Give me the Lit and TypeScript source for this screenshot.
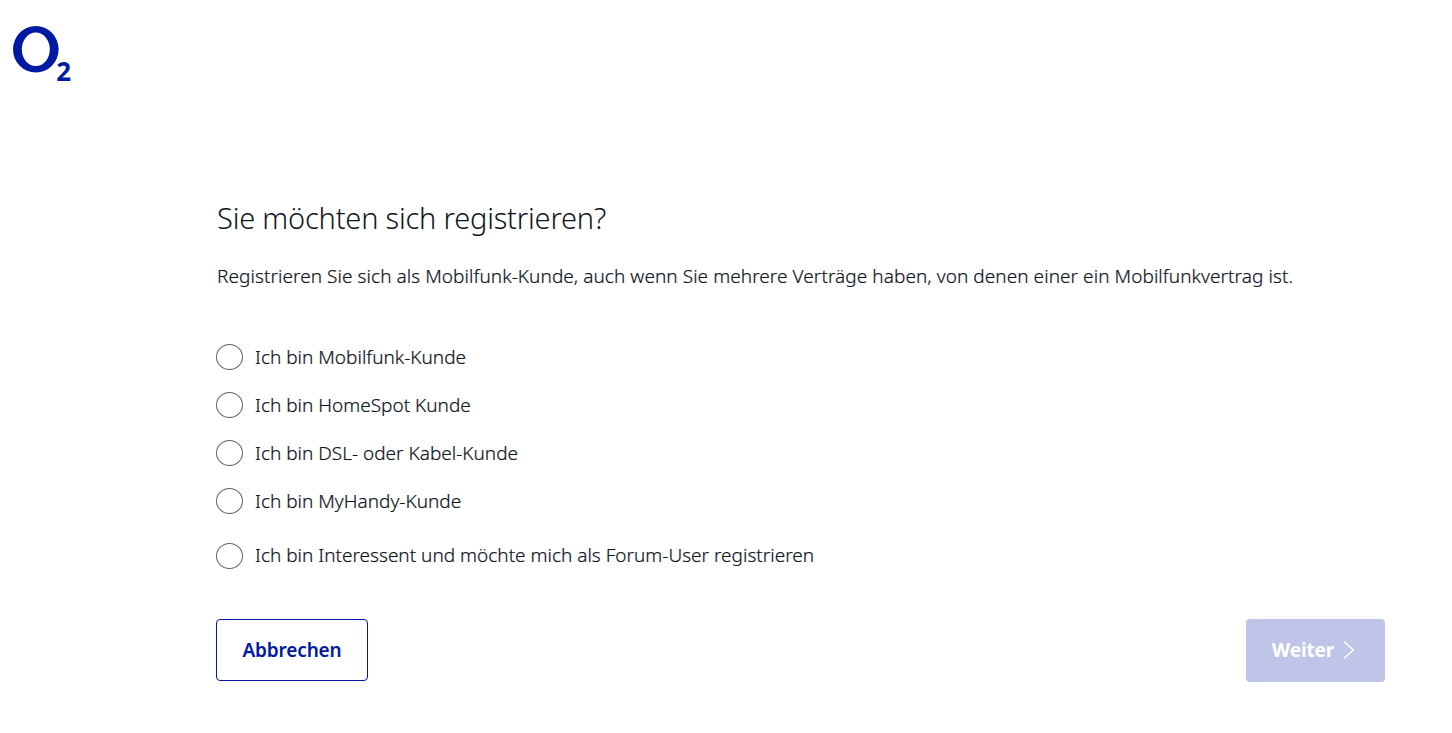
import { LitElement, html, css } from "lit";
import { customElement, property, state } from "lit/decorators.js";

interface CustomerType {
  id: string;
  label: string;
}

const CUSTOMER_TYPES: CustomerType[] = [
  { id: "mobile", label: "Ich bin Mobilfunk-Kunde" },
  { id: "homespot", label: "Ich bin HomeSpot Kunde" },
  { id: "dsl", label: "Ich bin DSL- oder Kabel-Kunde" },
  { id: "myhandy", label: "Ich bin MyHandy-Kunde" },
  { id: "forum", label: "Ich bin Interessent und möchte mich als Forum-User registrieren" },
];

@customElement("brand-logo")
class BrandLogo extends LitElement {
  static styles = css`
    :host {
      display: block;
      width: 64px;
      height: 68px;
    }

    svg {
      display: block;
    }

    .two {
      font: 700 27px "Noto Sans", sans-serif;
    }
  `;

  render() {
    return html`
      <svg width="64" height="68" viewBox="0 0 64 68" fill="#0019a5" role="img" aria-label="O2">
        <ellipse cx="22.8" cy="23.3" rx="22.8" ry="23.3" />
        <ellipse cx="22.8" cy="23.3" rx="14" ry="16.8" fill="#fff" />
        <text class="two" x="43.2" y="55.4" textLength="14.8" lengthAdjust="spacingAndGlyphs">2</text>
      </svg>
    `;
  }
}

@customElement("radio-option")
class RadioOption extends LitElement {
  @property() label = "";
  @property({ type: Boolean, reflect: true }) checked = false;

  static styles = css`
    :host {
      display: flex;
      align-items: center;
      gap: 12px;
      height: 28px;
      cursor: pointer;
    }

    .circle {
      box-sizing: border-box;
      flex: none;
      display: grid;
      place-items: center;
      width: 27px;
      height: 26px;
      border: 1px solid #5f6368;
      border-radius: 50%;
    }

    .label {
      padding-bottom: var(--label-lift, 0);
      -webkit-text-stroke: 0.2px currentColor;
    }

    :host([checked]) .circle::after {
      content: "";
      width: 13px;
      height: 13px;
      border-radius: 50%;
      background: #0019a5;
    }
  `;

  render() {
    return html`
      <span class="circle"></span>
      <span class="label">${this.label}</span>
    `;
  }
}

@customElement("app-root")
class AppRoot extends LitElement {
  @state() private _selected = "";

  static styles = css`
    :host {
      display: block;
      min-height: 733px;
      background: #fff;
      color: #0f1423;
      font: 300 19px/28px "Noto Sans", sans-serif;
    }

    header {
      padding: 26px 13px 0;
      height: 174px;
      box-sizing: border-box;
    }

    main {
      margin: 0 67px 0 216px;
    }

    h1 {
      margin: 0;
      padding: 24px 0 1px 1px;
      font-size: 29px;
      font-weight: 300;
      line-height: 40px;
      letter-spacing: -0.2px;
    }

    .intro {
      margin: 23px 0 0;
      padding-left: 1px;
      white-space: nowrap;
      letter-spacing: 0.06px;
      -webkit-text-stroke: 0.2px currentColor;
    }

    .options {
      display: flex;
      flex-direction: column;
      gap: 20px;
      margin-top: 53px;
    }

    .options radio-option:last-child {
      margin-top: 7px;
      --label-lift: 2px;
    }

    .actions {
      display: flex;
      justify-content: space-between;
      align-items: flex-start;
      margin-top: 49px;
    }

    button {
      box-sizing: border-box;
      display: flex;
      align-items: center;
      justify-content: center;
      padding: 0;
      border-radius: 4px;
      font: 600 19px/28px "Noto Sans", sans-serif;
      cursor: pointer;
    }

    .cancel {
      width: 152px;
      height: 62px;
      border: 1px solid #0019a5;
      background: #fff;
      color: #0019a5;
      letter-spacing: -0.15px;
    }

    .next {
      gap: 9px;
      width: 139px;
      height: 63px;
      padding: 0 4px 1px 0;
      border: 0;
      background: #0019a5;
      color: #fff;
      font-weight: 700;
      letter-spacing: -0.1px;
    }

    .next:disabled {
      background: #bfc5e8;
      cursor: default;
    }
  `;

  render() {
    return html`
      <header><brand-logo></brand-logo></header>
      <main>
        <h1>Sie möchten sich registrieren?</h1>
        <p class="intro">
          Registrieren Sie sich als Mobilfunk-Kunde, auch wenn Sie mehrere Verträge haben, von denen einer ein Mobilfunkvertrag ist.
        </p>
        <div class="options">
          ${CUSTOMER_TYPES.map((type) => html`
            <radio-option
              .label=${type.label}
              ?checked=${this._selected === type.id}
              @click=${() => { this._selected = type.id; }}
            ></radio-option>
          `)}
        </div>
        <div class="actions">
          <button class="cancel">Abbrechen</button>
          <button class="next" ?disabled=${!this._selected}>
            <span>Weiter</span>
            <svg width="12" height="18" viewBox="0 0 12 18" fill="none" stroke="currentColor" stroke-width="1.4">
              <path d="M1.2 0.8 10.3 9 1.2 17.2" />
            </svg>
          </button>
        </div>
      </main>
    `;
  }
}
